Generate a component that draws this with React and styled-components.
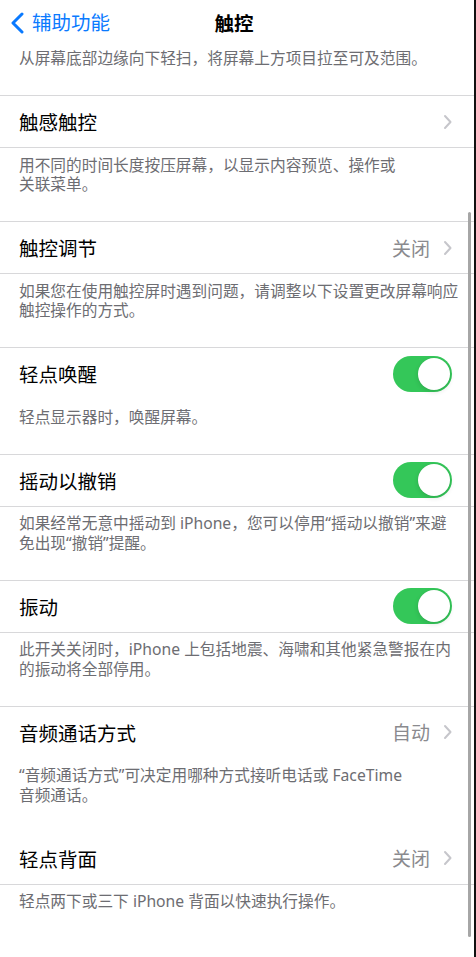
import React from 'react';
import styled, { createGlobalStyle } from 'styled-components';

const GlobalStyle = createGlobalStyle`
  html, body {
    margin: 0;
    padding: 0;
    background: #ffffff;
  }
  body {
    font-family: "Noto Sans", "Noto Sans CJK SC", sans-serif;
    -webkit-font-smoothing: antialiased;
  }
`;

const StyledPage = styled.div`
  position: relative;
  width: 476px;
  height: 957px;
  box-sizing: border-box;
  overflow: hidden;
  background: #ffffff;
  border-right: 2px solid #111111;
`;

const StyledNavBar = styled.header`
  display: grid;
  grid-template-columns: 1fr auto 1fr;
  align-items: center;
  height: 46px;
  padding: 0 10px 1px;
  box-sizing: border-box;
`;

const StyledBack = styled.div`
  display: flex;
  align-items: center;
  gap: 7px;
  color: #0a7aff;
  font-size: 19.5px;
  line-height: 1;
`;

const StyledTitle = styled.div`
  font-size: 19.5px;
  font-weight: 600;
  color: #000000;
  margin-right: 6px;
`;

const StyledRow = styled.div`
  display: flex;
  align-items: center;
  justify-content: space-between;
  height: 51px;
  padding: 0 22px 0 19px;
  border-top: 1px solid ${({ $line }) => ($line ? '#d8d8da' : 'transparent')};
`;

const StyledLabel = styled.span`
  font-size: 19.5px;
  color: #000000;
`;

const StyledDetail = styled.div`
  display: flex;
  align-items: center;
  gap: 13px;
  color: #8a8a8e;
  font-size: 19px;
`;

const StyledFooter = styled.p`
  margin: 0;
  padding: ${({ $top }) => $top ?? 7.5}px 19px 26.5px;
  border-top: 1px solid ${({ $line }) => ($line ? '#d8d8da' : 'transparent')};
  font-size: 15.7px;
  line-height: 19.5px;
  color: #6d6d72;
  white-space: nowrap;
`;

const StyledSwitch = styled.div`
  position: relative;
  width: 59px;
  height: 36px;
  border-radius: 18px;
  background: ${({ $on }) => ($on ? '#34c759' : '#e9e9eb')};
`;

const StyledKnob = styled.span`
  position: absolute;
  top: 2px;
  left: ${({ $on }) => ($on ? '25px' : '2px')};
  width: 32px;
  height: 32px;
  border-radius: 50%;
  background: #ffffff;
  box-shadow: 0 2px 5px rgba(0, 0, 0, 0.12), 0 0 1px rgba(0, 0, 0, 0.1);
`;

const StyledScrollbar = styled.div`
  position: absolute;
  top: 212px;
  right: 3px;
  width: 3px;
  height: 725px;
  border-radius: 2px;
  background: #a6a6a6;
`;

const BackChevron = () => (
  <svg width="15" height="22" viewBox="0 0 15 22">
    <path d="M12 2 L3 11 L12 20" fill="none" stroke="#0a7aff" strokeWidth="3" strokeLinecap="round" strokeLinejoin="round" />
  </svg>
);

const Chevron = () => (
  <svg width="9" height="16" viewBox="0 0 9 16">
    <path d="M2 2 L7.5 8 L2 14" fill="none" stroke="#c6c6cb" strokeWidth="2" strokeLinecap="round" strokeLinejoin="round" />
  </svg>
);

const Switch = ({ on }) => (
  <StyledSwitch $on={on}>
    <StyledKnob $on={on} />
  </StyledSwitch>
);

const Row = ({ label, value, toggle, line }) => (
  <StyledRow $line={line}>
    <StyledLabel>{label}</StyledLabel>
    {toggle ? (
      <Switch on />
    ) : (
      <StyledDetail>
        {value && <span>{value}</span>}
        <Chevron />
      </StyledDetail>
    )}
  </StyledRow>
);

const Lines = ({ lines }) =>
  lines.map((l, i) => (
    <React.Fragment key={i}>
      {i > 0 && <br />}
      {l}
    </React.Fragment>
  ));

const sections = [
  {
    label: '触感触控',
    line: true,
    footLine: true,
    foot: ['用不同的时间长度按压屏幕，以显示内容预览、操作或', '关联菜单。'],
  },
  {
    label: '触控调节',
    value: '关闭',
    line: true,
    footLine: true,
    foot: ['如果您在使用触控屏时遇到问题，请调整以下设置更改屏幕响应', '触控操作的方式。'],
  },
  {
    label: '轻点唤醒',
    toggle: true,
    line: true,
    footLine: false,
    foot: ['轻点显示器时，唤醒屏幕。'],
  },
  {
    label: '摇动以撤销',
    toggle: true,
    line: true,
    footLine: true,
    foot: ['如果经常无意中摇动到 iPhone，您可以停用“摇动以撤销”来避', '免出现“撤销”提醒。'],
  },
  {
    label: '振动',
    toggle: true,
    line: true,
    footLine: true,
    foot: ['此开关关闭时，iPhone 上包括地震、海啸和其他紧急警报在内', '的振动将全部停用。'],
  },
  {
    label: '音频通话方式',
    value: '自动',
    line: true,
    footLine: false,
    foot: ['“音频通话方式”可决定用哪种方式接听电话或 FaceTime', '音频通话。'],
  },
  {
    label: '轻点背面',
    value: '关闭',
    line: false,
    footLine: true,
    foot: ['轻点两下或三下 iPhone 背面以快速执行操作。'],
  },
];

const App = () => (
  <>
    <GlobalStyle />
    <StyledPage>
      <StyledNavBar>
        <StyledBack>
          <BackChevron />
          <span>辅助功能</span>
        </StyledBack>
        <StyledTitle>触控</StyledTitle>
        <div />
      </StyledNavBar>
      <StyledFooter $top={2}>从屏幕底部边缘向下轻扫，将屏幕上方项目拉至可及范围。</StyledFooter>
      {sections.map((s) => (
        <React.Fragment key={s.label}>
          <Row label={s.label} value={s.value} toggle={s.toggle} line={s.line} />
          <StyledFooter $line={s.footLine}>
            <Lines lines={s.foot} />
          </StyledFooter>
        </React.Fragment>
      ))}
      <StyledScrollbar />
    </StyledPage>
  </>
);

export default App;
